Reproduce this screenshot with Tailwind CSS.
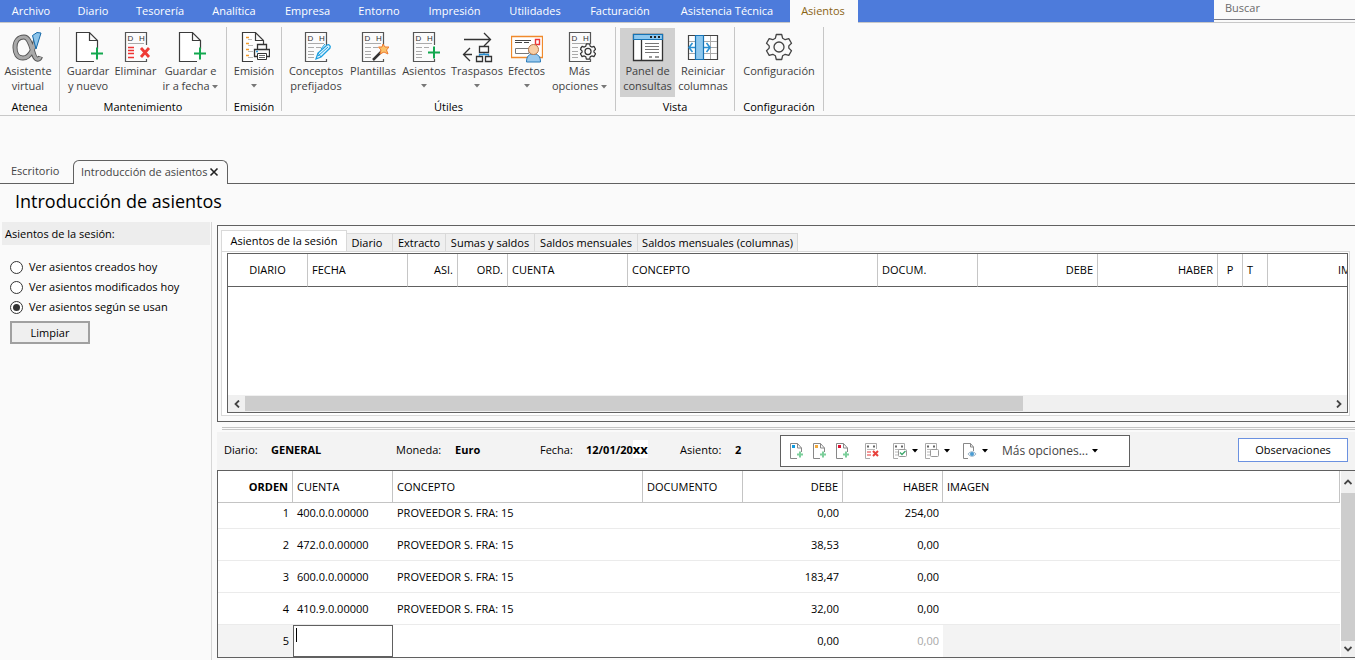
<!DOCTYPE html>
<html lang="es">
<head>
<meta charset="utf-8">
<title>Introducción de asientos</title>
<script src="https://cdn.jsdelivr.net/npm/@tailwindcss/browser@4"></script>
</head>
<body class="flex min-h-screen flex-col bg-[#fafafa] font-['Open_Sans','Noto_Sans',sans-serif] text-[11px] leading-4 text-black border-r border-white">

<!-- Shared icon parts -->
<svg class="hidden" xmlns="http://www.w3.org/2000/svg">
  <symbol id="page" viewBox="0 0 32 32"><path d="M22 30.500H4.500V1.500H17.500L25.500 9.500V18M17.500 1.500V9.500H25.500" fill="#fff" stroke="#3b3b3b" stroke-width="1.200"/></symbol>
  <symbol id="page-plus" viewBox="0 0 32 32"><use href="#page"/><path d="M19 22.500H31M25 16.500V28.500" stroke="#12a84f" stroke-width="2" fill="none"/></symbol>
  <symbol id="dh" viewBox="0 0 32 32"><path d="M26.500 14V1.500H5.500V30.500H26.500V28" fill="#fbfbfb" stroke="#555" stroke-width="1.200"/><text x="7.500" y="10" font-size="8" font-family="Liberation Sans" fill="#333">D</text><text x="19" y="10" font-size="8" font-family="Liberation Sans" fill="#333">H</text></symbol>
  <symbol id="dh-lines" viewBox="0 0 32 32"><use href="#dh"/><path d="M8 12.500H24M8 16.500H14M8 20.500H14M8 23.500H14M8 26.500H14M16 16.500H21" stroke="#aaa" stroke-width="1.200"/></symbol>
  <symbol id="mini-page" viewBox="0 0 16 16"><path d="M8 15.500H1.500V.5H8.500L12.500 5V9M8.500 .5V5H12.500" fill="#fff" stroke="#888"/><path d="M8 11.500H14M11 8.500V14.500" stroke="#7ccf9b" stroke-width="2"/></symbol>
  <symbol id="mini-dh" viewBox="0 0 16 16"><path d="M12.500 6V.5H1.500V15.500H6" fill="#fff" stroke="#aaa"/><path d="M3 3.500H5M9 3.500H11" stroke="#666" stroke-width="2"/><path d="M3 6.500H11" stroke="#bbb"/></symbol>
  <symbol id="caret" viewBox="0 0 6 4"><path d="M0 0H6L3 3.500Z" fill="currentColor"/></symbol>
  <symbol id="gear" viewBox="0 0 28 28"><path d="M11.300 1.500H16.700L17.600 5.200L20.200 6.700L23.800 5.600L26.500 10.300L23.800 12.900V15.100L26.500 17.700L23.800 22.400L20.200 21.300L17.600 22.800L16.700 26.500H11.300L10.400 22.800L7.800 21.300L4.200 22.400L1.500 17.700L4.200 15.100V12.900L1.500 10.300L4.200 5.600L7.800 6.700L10.400 5.200Z" fill="#fafafa" stroke="currentColor" stroke-linejoin="round"/><circle cx="14" cy="14" r="5" fill="none" stroke="currentColor"/></symbol>
</svg>

<header>
  <div class="flex h-[22px] bg-[#4d7bdb] text-white">
    <nav class="flex text-[11px] leading-[22px] [&>a]:pr-0.5 [&>a]:text-center">
      <a href="#" class="w-16">Archivo</a>
      <a href="#" class="w-15">Diario</a>
      <a href="#" class="w-[74px]">Tesorería</a>
      <a href="#" class="w-[74px]">Analítica</a>
      <a href="#" class="w-[73px]">Empresa</a>
      <a href="#" class="w-[70px]">Entorno</a>
      <a href="#" class="w-[81px]">Impresión</a>
      <a href="#" class="w-20">Utilidades</a>
      <a href="#" class="w-[90px]">Facturación</a>
      <a href="#" class="w-[124px]">Asistencia Técnica</a>
      <a href="#" class="h-[23px] w-17 bg-[#fafafa] text-[#8a6414]">Asientos</a>
    </nav>
    <div class="ml-auto w-[141px] bg-[#fafafa]">
      <input type="text" placeholder="Buscar" aria-label="Buscar" class="block h-5 w-full border-b border-[#7c7c84] pb-1 pl-[11px] text-[11px] outline-none placeholder:text-[#6a6a6a]">
    </div>
  </div>

  <div class="flex border-y border-[#c8c8c8] py-1 text-[#3f3f3f] [&_button]:flex [&_button]:h-[69px] [&_button]:flex-col [&_button]:items-center [&_button]:pt-[3px] [&_button]:leading-[15px] [&_button]:whitespace-nowrap [&_button>svg]:size-8 [&_button>svg]:shrink-0 [&>section]:h-[84px] [&>section]:border-r [&>section]:border-[#c6c6c6] [&>section]:pt-px [&_div]:flex [&_h2]:mt-0.5 [&_h2]:text-center [&_h2]:text-black">
    <section class="w-15">
      <div>
        <button class="w-14">
          <svg viewBox="0 0 32 32" fill="none"><path d="M24.500 5C22 16 19 27 11 27C5.500 27 3 22.500 3 16.500C3 10 6.500 6 12 6C20 6 20 27 25 28C27 28.500 28 27 28.500 25.500" stroke="#555" stroke-width="5"/><path d="M24.500 6C22 16 19 27 11 27C5.500 27 3 22.500 3 16.500C3 10 6.500 6 12 6C20 6 20 27 25 28C27 28.500 28 27 28 26" stroke="#a9a9a9" stroke-width="3.200"/><path d="M20.500 4.500L25 1.500L29 2L24 18Z" fill="#8cc4ea" stroke="#1769a8"/></svg>
          <span>Asistente<br>virtual</span>
        </button>
      </div>
      <h2>Atenea</h2>
    </section>
    <section class="w-[167px]">
      <div class="pl-1">
        <button class="w-12"><svg><use href="#page-plus"/></svg><span>Guardar<br>y nuevo</span></button>
        <button class="w-[47px]"><svg viewBox="0 0 32 32"><use href="#dh"/><path d="M8 12.500H24" stroke="#aaa"/><path d="M8 16.500H14M8 19.500H14M8 22.500H14M8 26.500H14" stroke="#e33" stroke-width="1.300"/><path d="M21 17L29 26M29 17L21 26" stroke="#ef3b36" stroke-width="2.800"/></svg><span>Eliminar</span></button>
        <button class="w-[63px]"><svg><use href="#page-plus"/></svg><span class="text-center">Guardar e<br>ir a fecha <svg class="inline h-1 w-1.5 align-middle text-[#777]"><use href="#caret"/></svg></span></button>
      </div>
      <h2>Mantenimiento</h2>
    </section>
    <section class="w-[55px]">
      <div>
        <button class="w-[54px]">
          <svg viewBox="0 0 32 32" fill="none"><path d="M15 30.500H4.500V1.500H17.500L25.500 9.500V13M17.500 1.500V9.500H25.500" fill="#fff" stroke="#3b3b3b" stroke-width="1.200"/><path d="M8 6.500H11M8 12.500H11M8 18.500H11M8 24.500H11" stroke="#f39a2a" stroke-width="1.400"/><path d="M10 8.500H14M10 14.500H15M10 20.500H15M10 26.500H15" stroke="#bbb"/><path d="M19.500 18V13.500H28.500V18M19.500 25.500H16.500V18.500H31.500V25.500H28.500" fill="#fafafa" stroke="#333" stroke-width="1.300"/><path d="M19.500 22.500H28.500V28.500H19.500Z" fill="#fff" stroke="#333"/><path d="M21 24.500H27M21 26.500H27" stroke="#666"/><path d="M18 20.500H20" stroke="#2a9fe0" stroke-width="1.500"/></svg>
          <span>Emisión</span><svg class="mt-1.5 h-1! w-1.5! text-[#777]"><use href="#caret"/></svg>
        </button>
      </div>
      <h2>Emisión</h2>
    </section>
    <section class="w-[334px]">
      <div class="pl-1">
        <button class="w-15"><svg viewBox="0 0 32 32"><use href="#dh-lines"/><path d="M16 28L18 22L27 14C29 13 31 15 30 17L21 26Z" fill="#dff3fd" stroke="#1c9fe0" stroke-width="1.300"/><path d="M18 22L21 26M18 25L28 16M25 13L21 18" stroke="#1c9fe0" fill="none"/></svg><span>Conceptos<br>prefijados</span></button>
        <button class="w-[54px]"><svg viewBox="0 0 32 32"><use href="#dh-lines"/><path d="M16 29L25 20" stroke="#333" stroke-width="2.500"/><path d="M26 13L28 16L32 16L29.500 19L31 23L27 21L23 23L24 19L21.500 16L25 16Z" fill="#fbc36b" stroke="#ee7a30"/></svg><span>Plantillas</span></button>
        <button class="w-12"><svg viewBox="0 0 32 32"><use href="#dh-lines"/><path d="M20 21.500H32M26 15.500V27.500" stroke="#12a84f" stroke-width="2"/></svg><span>Asientos</span><svg class="mt-1.5 h-1! w-1.5! text-[#777]"><use href="#caret"/></svg></button>
        <button class="w-[58px]"><svg viewBox="0 0 32 32" fill="none" stroke="#333" stroke-width="1.300"><path d="M3 8.500H29.500M23 2L29.500 8.500L23 15M11 23.500H2.500M9 17L2.500 23.500L9 30"/><path d="M18.500 15.500H27.500V21.500H18.500ZM15.500 25.500H21.500V30.500H15.500ZM24.500 25.500H30.500V30.500H24.500Z"/><path d="M18.500 25V23.500H27.500V25M23 22V23.500" stroke="#2a8fd0"/></svg><span>Traspasos</span><svg class="mt-1.5 h-1! w-1.5! text-[#777]"><use href="#caret"/></svg></button>
        <button class="w-[41px]"><svg viewBox="0 0 32 32" fill="none"><path d="M.5 5.500H31.500V26.500H.5Z" fill="#fff" stroke="#f08a2c" stroke-width="1.300"/><path d="M4 9.500H20M4 11.500H11M13 11.500H18" stroke="#444"/><path d="M4.500 17.500H18V22.500H4.500Z" stroke="#777"/><path d="M24.500 8.500H28.500V13.500H24.500Z" stroke="#e33" stroke-width="1.400"/><path d="M15.500 31C15.500 25 18 23 22.500 23S29.500 25 29.500 31Z" fill="#9ac9ee" stroke="#2a7ab8"/><circle cx="22.500" cy="18.500" r="5" fill="#f8cfa6" stroke="#b9784a"/></svg><span>Efectos</span><svg class="mt-1.5 h-1! w-1.5! text-[#777]"><use href="#caret"/></svg></button>
        <button class="ml-0.5 w-[61px]"><svg viewBox="0 0 32 32" class="text-[#333]"><use href="#dh-lines"/><circle cx="24" cy="20.500" r="8" fill="#fafafa"/><use href="#gear" x="15.500" y="12" width="17" height="17" stroke-width="2"/></svg><span class="text-center">Más<br>opciones <svg class="inline h-1 w-1.5 align-middle text-[#777]"><use href="#caret"/></svg></span></button>
      </div>
      <h2>Útiles</h2>
    </section>
    <section class="w-[119px]">
      <div class="pl-1">
        <button class="w-[55px] bg-[#d0d0d0]"><svg viewBox="0 0 32 32" fill="none"><path d="M1.500 3.500H30.500V29.500H1.500Z" fill="#fff" stroke="#333" stroke-width="1.300"/><path d="M1.500 3.500H30.500V8.500H1.500Z" fill="#8fc8ee" stroke="#1673b5" stroke-width="1.200"/><path d="M9.500 9V29" stroke="#333" stroke-width="1.300"/><path d="M18 6H20M22 6H24M26 6H28" stroke="#222" stroke-width="2"/><path d="M13 12.500H27M13 15.500H27M13 18.500H27M13 21.500H27" stroke="#777"/><path d="M17 26H20M23 26H27" stroke="#777" stroke-width="1.500"/></svg><span class="text-center">Panel de<br>consultas</span></button>
        <button class="w-14"><svg viewBox="0 0 32 32" fill="none"><path d="M1.500 4.500H30.500V28.500H1.500Z" fill="#fff" stroke="#444" stroke-width="1.200"/><path d="M2 10.500H30M2 16.500H30M2 22.500H30M23.500 5V28" stroke="#aaa"/><path d="M8.500 4.500H16.500V28.500H8.500Z" fill="#8fc8ee" stroke="#1673b5" stroke-width="1.200"/><path d="M8 16.500H2M5.500 12L2 16.500L5.500 21M17 16.500H23M19.500 12L23 16.500L19.500 21" stroke="#2a8fd0" stroke-width="1.600"/></svg><span class="text-center">Reiniciar<br>columnas</span></button>
      </div>
      <h2>Vista</h2>
    </section>
    <section class="w-[89px]">
      <div class="pl-1">
        <button class="w-20"><svg viewBox="0 0 32 32" class="text-[#444]"><use href="#gear" x="2" y="2" width="28" height="28" stroke-width="1.300"/></svg><span>Configuración</span></button>
      </div>
      <h2>Configuración</h2>
    </section>
  </div>
</header>

<!-- Document tabs -->
<div class="mt-11 flex items-end text-[#444]">
  <a href="#" class="h-6 w-[73px] border-b border-[#606060] pt-[3px] pl-[11px]">Escritorio</a>
  <div class="flex h-6 w-[155px] items-center justify-between rounded-t-md border border-b-0 border-[#606060] pr-2 pb-0.5 pl-[7px] whitespace-nowrap">
    <a href="#">Introducción de asientos</a>
    <button aria-label="Cerrar"><svg class="size-2.5" viewBox="0 0 10 10"><path d="M1.500 1.500L8.500 8.500M8.500 1.500L1.500 8.500" stroke="#222" stroke-width="1.600"/></svg></button>
  </div>
  <div class="h-6 flex-1 border-b border-[#606060]"></div>
</div>
<h1 class="pt-[3px] pb-[7px] pl-[15px] text-[18px] leading-7">Introducción de asientos</h1>

<main class="flex flex-1">
  <aside class="w-[212px] shrink-0 border-r border-[#d6d6d6] pl-0.5">
    <h2 class="h-[23px] w-52 bg-[#ededed] pl-[3px] leading-6">Asientos de la sesión:</h2>
    <form class="mt-3 pl-2 [&_input]:mr-1.5 [&_input]:grid [&_input]:size-[13px] [&_input]:appearance-none [&_input]:place-content-center [&_input]:rounded-full [&_input]:border [&_input]:border-[#333] [&_input]:bg-white [&_input]:before:size-[7px] [&_input]:before:rounded-full [&_input]:checked:before:bg-[#333] [&_label]:flex [&_label]:h-5 [&_label]:items-center">
      <label><input type="radio" name="ver">Ver asientos creados hoy</label>
      <label><input type="radio" name="ver">Ver asientos modificados hoy</label>
      <label><input type="radio" name="ver" checked>Ver asientos según se usan</label>
      <button type="button" class="mt-1 h-[23px] w-20 border-2 border-[#a0a0a0] bg-[#efefef]">Limpiar</button>
    </form>
  </aside>

  <div class="flex min-w-0 flex-1 flex-col pl-[5px]">
    <section class="mt-[3px] border border-r-0 border-[#606060] pt-1 pr-[5px] pb-[5px] pl-[3px]">
      <div class="flex items-end whitespace-nowrap [&>button]:h-[18px] [&>button]:border [&>button]:border-b-0 [&>button]:border-l-0 [&>button]:border-[#d9d9d9] [&>button]:bg-[#efefef]" role="tablist">
        <button role="tab" class="h-[21px]! w-[126px] border-l! bg-white!">Asientos de la sesión</button>
        <button role="tab" class="w-[46px] pr-[5px]">Diario</button>
        <button role="tab" class="w-[53px]">Extracto</button>
        <button role="tab" class="w-[89px]">Sumas y saldos</button>
        <button role="tab" class="w-[103px]">Saldos mensuales</button>
        <button role="tab" class="w-40">Saldos mensuales (columnas)</button>
      </div>
      <div class="border border-[#d9d9d9] bg-white pt-px pr-px pb-0.5 pl-[5px]">
        <div class="overflow-hidden border border-[#606060]">
          <div class="h-[141px] overflow-hidden">
            <table class="w-[1160px] table-fixed border-separate border-spacing-0 text-left [&_th]:h-[33px] [&_th]:border-r [&_th]:border-b [&_th]:border-r-[#c6c6c6] [&_th]:border-b-[#606060] [&_th]:px-1 [&_th]:font-normal">
              <colgroup><col class="w-20"><col class="w-25"><col class="w-[50px]"><col class="w-[50px]"><col class="w-30"><col class="w-[250px]"><col class="w-25"><col class="w-30"><col class="w-30"><col class="w-[25px]"><col class="w-[25px]"><col></colgroup>
              <thead><tr>
                <th class="text-center">DIARIO</th><th>FECHA</th><th class="text-right">ASI.</th><th class="text-right">ORD.</th><th>CUENTA</th><th>CONCEPTO</th><th>DOCUM.</th><th class="text-right">DEBE</th><th class="text-right">HABER</th><th class="text-center">P</th><th>T</th><th class="pl-[70px]!">IM</th>
              </tr></thead>
            </table>
          </div>
          <div class="flex h-[17px] items-center bg-[#f0f0f0]">
            <button aria-label="Desplazar a la izquierda" class="flex w-[17px] shrink-0 justify-center"><svg class="h-2 w-1.5" viewBox="0 0 6 8"><path d="M5 .5L1.500 4L5 7.500" fill="none" stroke="#444" stroke-width="1.800"/></svg></button>
            <div class="flex flex-1"><div class="h-[15px] w-[71.7%] bg-[#cdcdcd]"></div></div>
            <button aria-label="Desplazar a la derecha" class="flex w-[17px] shrink-0 justify-center"><svg class="h-2 w-1.5" viewBox="0 0 6 8"><path d="M1 .5L4.500 4L1 7.500" fill="none" stroke="#444" stroke-width="1.800"/></svg></button>
          </div>
        </div>
      </div>
    </section>

    <div class="mt-[5px] ml-[5px] h-[3px] border-y border-[#c4c4c4]"></div>

    <section class="mt-0.5 flex h-[38px] items-center bg-[#f3f3f3] whitespace-nowrap">
      <dl class="flex w-[563px] pb-0.5 pl-[7px] [&_dd]:font-bold">
        <div class="flex w-[172px]"><dt class="w-[47px]">Diario:</dt><dd>GENERAL</dd></div>
        <div class="flex w-36"><dt class="w-[59px]">Moneda:</dt><dd>Euro</dd></div>
        <div class="flex w-35"><dt class="w-[46px]">Fecha:</dt><dd>12/01/20<span class="bg-white text-[13px] leading-none">xx</span></dd></div>
        <div class="flex"><dt class="w-[55px]">Asiento:</dt><dd>2</dd></div>
      </dl>
      <div class="flex h-8 w-[350px] items-center border border-[#606060] bg-white pl-1 [&>button]:flex [&>button]:w-[23px] [&>button]:items-center [&>button]:justify-center [&>button>svg:first-child]:size-4 [&>button>svg:first-child]:shrink-0" role="toolbar">
        <button aria-label="Nuevo azul"><svg viewBox="0 0 16 16"><use href="#mini-page"/><path d="M3 2H6V5H3Z" fill="#0f9be0"/></svg></button>
        <button aria-label="Nuevo naranja"><svg viewBox="0 0 16 16"><use href="#mini-page"/><path d="M3 2H6V5H3Z" fill="#f3a93a"/></svg></button>
        <button aria-label="Nuevo rojo"><svg viewBox="0 0 16 16"><use href="#mini-page"/><path d="M3 2H6V5H3Z" fill="#e01030"/></svg></button>
        <button aria-label="Eliminar línea" class="ml-1.5"><svg viewBox="0 0 16 16"><use href="#mini-dh"/><path d="M3 9H7M3 12H7" stroke="#ee7a7a" stroke-width="1.500"/><path d="M9 8L14 13M14 8L9 13" stroke="#e8413c" stroke-width="2"/></svg></button>
        <button aria-label="Marcar" class="ml-1.5 w-8! gap-1"><svg viewBox="0 0 16 16"><use href="#mini-dh"/><path d="M3 9H6M3 12H6" stroke="#bbb"/><rect x="6.500" y="6.500" width="8" height="7" rx="1" fill="#fff" stroke="#999"/><path d="M8 9.500L10 11.500L13.500 8" fill="none" stroke="#3aa66a" stroke-width="1.300"/></svg><svg class="h-1 w-1.5"><use href="#caret"/></svg></button>
        <button aria-label="Desmarcar" class="w-8! gap-1"><svg viewBox="0 0 16 16"><use href="#mini-dh"/><path d="M3 9H6M3 12H6" stroke="#bbb"/><rect x="6.500" y="6.500" width="8" height="7" rx="1" fill="#fff" stroke="#999"/></svg><svg class="h-1 w-1.5"><use href="#caret"/></svg></button>
        <button aria-label="Ver documento" class="ml-1.5 w-8! gap-1"><svg viewBox="0 0 16 16"><path d="M6 15.500H1.500V.5H8.500L11.500 4V8M8.500 .5V4H11.500" fill="#fff" stroke="#888"/><path d="M6 11C8 8 12 8 14 11C12 14 8 14 6 11Z" fill="#e6eef5" stroke="#9db5c8"/><circle cx="10" cy="11" r="2" fill="#4b9cd3"/></svg><svg class="h-1 w-1.5"><use href="#caret"/></svg></button>
        <button class="ml-[11px] w-auto! gap-1 text-[12px] text-[#444]">Más opciones...<svg class="h-1! w-1.5! text-black"><use href="#caret"/></svg></button>
      </div>
      <button class="mr-[7px] mb-0.5 ml-auto h-6 w-[110px] border border-[#6b91e0] bg-white">Observaciones</button>
    </section>

    <section class="flex border-y border-l border-[#606060] bg-white">
      <table class="flex-1 table-fixed border-separate border-spacing-0 [&_td]:h-8 [&_td]:border-b [&_td]:border-[#ebebeb] [&_td]:px-1 [&_td]:py-0 [&_th]:h-8 [&_th]:border-r [&_th]:border-b [&_th]:border-[#c4c4c4] [&_th]:px-1 [&_th]:py-0 [&_th]:text-left [&_th]:font-normal [&_tr>*:nth-child(1)]:text-right [&_tr>*:nth-child(5)]:text-right [&_tr>*:nth-child(6)]:text-right">
        <colgroup><col class="w-[75px]"><col class="w-25"><col class="w-[250px]"><col class="w-25"><col class="w-25"><col class="w-25"><col></colgroup>
        <thead><tr><th class="font-bold!">ORDEN</th><th>CUENTA</th><th>CONCEPTO</th><th>DOCUMENTO</th><th>DEBE</th><th>HABER</th><th>IMAGEN</th></tr></thead>
        <tbody>
          <tr class="[&>td]:h-[26px]! [&>td]:pb-1.5!"><td>1</td><td>400.0.0.00000</td><td>PROVEEDOR S. FRA: 15</td><td></td><td>0,00</td><td>254,00</td><td></td></tr>
          <tr><td>2</td><td>472.0.0.00000</td><td>PROVEEDOR S. FRA: 15</td><td></td><td>38,53</td><td>0,00</td><td></td></tr>
          <tr><td>3</td><td>600.0.0.00000</td><td>PROVEEDOR S. FRA: 15</td><td></td><td>183,47</td><td>0,00</td><td></td></tr>
          <tr><td>4</td><td>410.9.0.00000</td><td>PROVEEDOR S. FRA: 15</td><td></td><td>32,00</td><td>0,00</td><td></td></tr>
          <tr class="[&>td]:border-0!"><td class="bg-[#f3f3f3]">5</td><td class="p-0!"><div class="flex h-8 items-start border border-[#606060] bg-white pt-0.5 pl-0.5"><span class="h-3.5 w-px bg-black"></span><input type="text" aria-label="Cuenta" class="h-4 w-full outline-none"></div></td><td></td><td></td><td>0,00</td><td class="text-[#a8a8a8]">0,00</td><td class="bg-[#f3f3f3]"></td></tr>
        </tbody>
      </table>
      <div class="ml-px flex w-[14px] flex-col items-center bg-[#f0f0f0]">
        <button aria-label="Subir" class="flex h-[22px] items-center"><svg class="h-1.5 w-2" viewBox="0 0 8 6"><path d="M.5 5L4 1.500L7.500 5" fill="none" stroke="#444" stroke-width="1.800"/></svg></button>
        <div class="w-full flex-1 bg-[#cdcdcd]"></div>
        <button aria-label="Bajar" class="flex h-4 items-center"><svg class="h-1.5 w-2" viewBox="0 0 8 6"><path d="M.5 1L4 4.500L7.500 1" fill="none" stroke="#444" stroke-width="1.800"/></svg></button>
      </div>
    </section>
  </div>
</main>
</body>
</html>
